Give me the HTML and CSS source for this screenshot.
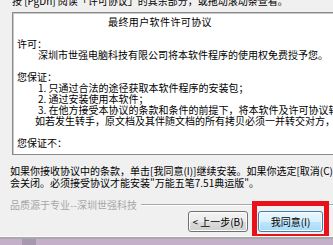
FILE: index.html
```html
<!DOCTYPE html>
<html lang="zh-CN">

<head>
    <meta charset="UTF-8">
    <meta name="viewport" content="width=device-width, initial-scale=1.0">
    <title>许可协议</title>

    <link rel="stylesheet" href="styles.css">
</head>

<body>
    <div class="window">
        <p class="hint">按 [PgDn] 阅读「许可协议」的其余部分，或拖动滚动条查看。</p>

        <div class="license">
            <p class="title">最终用户软件许可协议</p>
            <p class="gap"></p>
            <p>许可：</p>
            <p class="indent">深圳市世强电脑科技有限公司将本软件程序的使用权免费授予您。</p>
            <p class="gap"></p>
            <p>您保证：</p>
            <p class="indent">1. 只通过合法的途径获取本软件程序的安装包；</p>
            <p class="indent">2. 通过安装使用本软件；</p>
            <p class="indent">3. 在他方接受本协议的条款和条件的前提下，将本软件及许可协议转让给他方，</p>
            <p class="indent-2">如若发生转手，原文档及其伴随文档的所有拷贝必须一并转交对方，或将其销毁。</p>
            <p class="gap"></p>
            <p>您保证不：</p>
        </div>

        <div class="accept">
            <p>如果你接收协议中的条款，单击[我同意(I)]继续安装。如果你选定[取消(C)]，安装程序将</p>
            <p>会关闭。必须接受协议才能安装"万能五笔7.51典运版"。</p>
        </div>

        <div class="footer">
            <span class="brand">品质源于专业--深圳世强科技</span>
            <span class="rule"></span>
        </div>

        <div class="buttons">
            <button class="btn">&lt; 上一步(B)</button>
            <span class="mark">
                <button class="btn btn-default">我同意(I)</button>
            </span>
        </div>
    </div>
    <div class="desktop"></div>
</body>

</html>
```

FILE: styles.css
```css
* {
    margin: 0;
    padding: 0;
    box-sizing: border-box;
}

body {
    width: 333px;
    height: 245px;
    overflow: hidden;
    background: #f0f0f0;
    font-family: "Noto Sans CJK SC", "Liberation Sans", sans-serif;
    font-size: 10px;
    color: #000;
}

.window {
    height: 236px;
    display: flex;
    flex-direction: column;
    overflow: hidden;
}

.hint {
    margin: -5px 0 0 12px;
    line-height: 11px;
    white-space: nowrap;
}

.license {
    margin: 6px 0 0 12px;
    width: 340px;
    height: 143px;
    padding: 3px 0 0 4px;
    background: #fff;
    border: 1px solid #8a8a8a;
    box-shadow: inset 1px 1px #c8c8c8;
    overflow: hidden;
}

.license p {
    line-height: 11px;
    height: 11px;
    white-space: nowrap;
}

.license .title {
    padding-left: 91px;
    letter-spacing: 0.4px;
}

.license .indent {
    padding-left: 21px;
}

.license .indent-2 {
    padding-left: 18px;
}

.accept {
    margin: 10px 0 0 10px;
    width: 323px;
    overflow: hidden;
}

.accept p {
    line-height: 12px;
    white-space: nowrap;
}

.footer {
    margin: 10px 0 0 10px;
    display: flex;
    align-items: center;
    height: 12px;
    line-height: 12px;
}

.brand {
    color: #a6a6a6;
    white-space: nowrap;
}

.rule {
    flex: 1;
    margin-left: 4px;
    border-top: 1px solid #a8a8a8;
    border-bottom: 1px solid #fff;
}

.buttons {
    display: flex;
    justify-content: flex-end;
    gap: 10px;
    padding-right: 10px;
}

.btn {
    width: 60px;
    height: 21px;
    font-family: "Noto Sans CJK SC", "Liberation Sans", sans-serif;
    font-size: 10px;
    color: #000;
    border: 1px solid #707070;
    border-radius: 3px;
    background: linear-gradient(#f2f2f2 0%, #ebebeb 50%, #dddddd 51%, #cfcfcf 100%);
    box-shadow: inset 0 0 0 1px #fcfcfc;
}

.mark {
    position: relative;
    display: flex;
}

.btn-default {
    width: 65px;
    border-color: #3c7fb1;
    background: linear-gradient(#eaf6fd 0%, #d9f0fc 50%, #bee6fd 51%, #a7d9f5 100%);
}

.mark::after {
    content: "";
    position: absolute;
    top: -10px;
    left: -6px;
    right: -6px;
    bottom: -7px;
    border: 5px solid #e8121a;
}

.desktop {
    height: 9px;
    border-top: 1px solid #fafafa;
    background: linear-gradient(#a9a9a9 0, #a9a9a9 2px, #c4b0c9 2px);
    background-color: #c4b0c9;
    position: relative;
}

.desktop::before {
    content: "";
    position: absolute;
    left: 22px;
    top: 2px;
    width: 14px;
    bottom: 0;
    background: #a898ae;
}
```
